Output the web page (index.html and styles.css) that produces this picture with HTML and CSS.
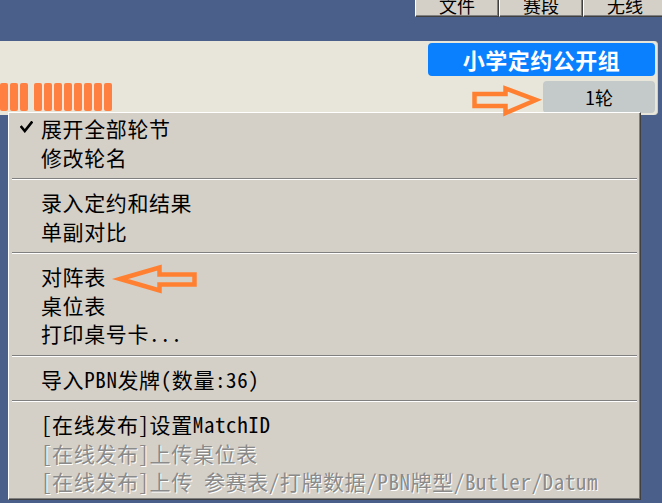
FILE: index.html
```html
<!DOCTYPE html>
<html lang="zh-CN">
<head>
    <meta charset="UTF-8">
    <title>轮次菜单</title>
    <link rel="stylesheet" href="styles.css">
</head>
<body>

<div class="toolbar">
    <div class="tool-btn"><span>文件</span></div>
    <div class="tool-btn"><span>赛段</span></div>
    <div class="tool-btn"><span>无线</span></div>
</div>

<section class="panel">
    <div class="bars">
        <div class="bar-group">
            <span class="bar"></span><span class="bar"></span><span class="bar"></span>
        </div>
        <div class="bar-group">
            <span class="bar"></span><span class="bar"></span><span class="bar"></span><span class="bar"></span>
            <span class="bar"></span><span class="bar"></span><span class="bar"></span><span class="bar"></span>
        </div>
    </div>
    <div class="panel-right">
        <div class="group-btn">小学定约公开组</div>
        <div class="round-box">1轮</div>
    </div>
</section>

<div class="menu">
    <div class="item">
        <span class="mark">
            <svg width="13" height="12" viewBox="0 0 13 12"><path d="M1.5 6 L4.8 10 L11.5 1.5" fill="none" stroke="#000" stroke-width="2.6" stroke-linecap="square"/></svg>
        </span>展开全部轮节
    </div>
    <div class="item"><span class="mark"></span>修改轮名</div>
    <div class="sep"></div>
    <div class="item"><span class="mark"></span>录入定约和结果</div>
    <div class="item"><span class="mark"></span>单副对比</div>
    <div class="sep"></div>
    <div class="item"><span class="mark"></span>对阵表</div>
    <div class="item"><span class="mark"></span>桌位表</div>
    <div class="item"><span class="mark"></span>打印桌号卡...</div>
    <div class="sep"></div>
    <div class="item"><span class="mark"></span>导入PBN发牌(数量:36)</div>
    <div class="sep"></div>
    <div class="item"><span class="mark"></span>[在线发布]设置MatchID</div>
    <div class="item disabled"><span class="mark"></span>[在线发布]上传桌位表</div>
    <div class="item disabled"><span class="mark"></span>[在线发布]上传 参赛表/打牌数据/PBN牌型/Butler/Datum</div>
</div>

<!-- 标注箭头 -->
<svg class="marks" width="662" height="503" viewBox="0 0 662 503">
    <polygon points="474.5,94 505.5,94 505.5,88.5 536,100 505.5,113 505.5,106 474.5,106" />
    <polygon points="120,279 159.5,267.5 159.5,274.5 194.5,274.5 194.5,284.5 159.5,284.5 159.5,290.5" />
</svg>

</body>
</html>
```

FILE: styles.css
```css
html, body {
    margin: 0;
    overflow: hidden;
}

body {
    width: 662px;
    height: 503px;
    position: relative;
    background-color: #4a5f89;
    font-family: "Noto Sans CJK SC", sans-serif;
}

/* 顶部按钮 */
.toolbar {
    display: flex;
    justify-content: flex-end;
    height: 17px;
    margin-right: -5px;
}

.tool-btn {
    width: 84px;
    height: 17px;
    box-sizing: border-box;
    display: flex;
    align-items: flex-end;
    justify-content: center;
    overflow: hidden;
    background-color: #d4d0c8;
    border-left: 1px solid #fff;
    border-right: 1px solid #404040;
    border-bottom: 1px solid #404040;
    box-shadow: inset -1px -1px 0 #808080;
    font-size: 18px;
    line-height: 18px;
    color: #000;
}

.tool-btn span {
    padding-bottom: 2px;
}

/* 面板 */
.panel {
    display: flex;
    margin-top: 24px;
    width: 658px;
    height: 74px;
    box-sizing: border-box;
    background-color: #e8e6da;
    border-radius: 0 4px 4px 0;
    border-right: 1px solid #d0cec4;
}

.bars {
    display: flex;
    gap: 6px;
    align-self: flex-end;
    margin-bottom: 4px;
}

.bar-group {
    display: flex;
    gap: 2px;
}

.bar {
    width: 8px;
    height: 28px;
    background-color: #ff8040;
    border-radius: 2px;
}

.panel-right {
    margin-left: auto;
    padding: 2px 2px 0 0;
    display: flex;
    flex-direction: column;
    align-items: flex-end;
    gap: 5px;
}

.group-btn {
    width: 227px;
    height: 33px;
    line-height: 33px;
    text-align: center;
    background-color: #0a80ff;
    border-radius: 4px;
    color: #fff;
    font-size: 22px;
    font-weight: bold;
    letter-spacing: 0.5px;
}

.round-box {
    width: 112px;
    height: 32px;
    line-height: 32px;
    text-align: center;
    background-color: #c4cac9;
    border-radius: 4px;
    font-size: 18px;
    color: #000;
}

/* 弹出菜单 */
.menu {
    position: absolute;
    left: 8px;
    top: 112px;
    width: 633px;
    box-sizing: border-box;
    padding: 1px 0 3px;
    background-color: #d4d0c8;
    border-top: 1px solid #fff;
    border-left: 1px solid #fff;
    border-right: 1px solid #404040;
    border-bottom: 1px solid #404040;
    box-shadow: inset -1px -1px 0 #808080;
    font-family: "Noto Sans Mono CJK SC", "Noto Sans CJK SC", monospace;
    font-size: 21px;
    letter-spacing: 0.6px;
    color: #000;
}

.item {
    display: flex;
    align-items: center;
    height: 28.5px;
    line-height: 28.5px;
    white-space: nowrap;
}

.mark {
    width: 32px;
    flex-shrink: 0;
    display: flex;
    align-items: center;
}

.mark svg {
    margin: -3px 0 0 11px;
}

.item.disabled {
    color: #8a8a8a;
    text-shadow: 1px 1px 0 #fff;
}

.sep {
    height: 1px;
    margin: 7px 3px 8px 3px;
    background-color: #808080;
    border-bottom: 1px solid #fff;
}

.marks {
    position: absolute;
    left: 0;
    top: 0;
    pointer-events: none;
}

.marks polygon {
    fill: none;
    stroke: #ff8030;
    stroke-width: 4.5;
    stroke-linejoin: miter;
}
```
